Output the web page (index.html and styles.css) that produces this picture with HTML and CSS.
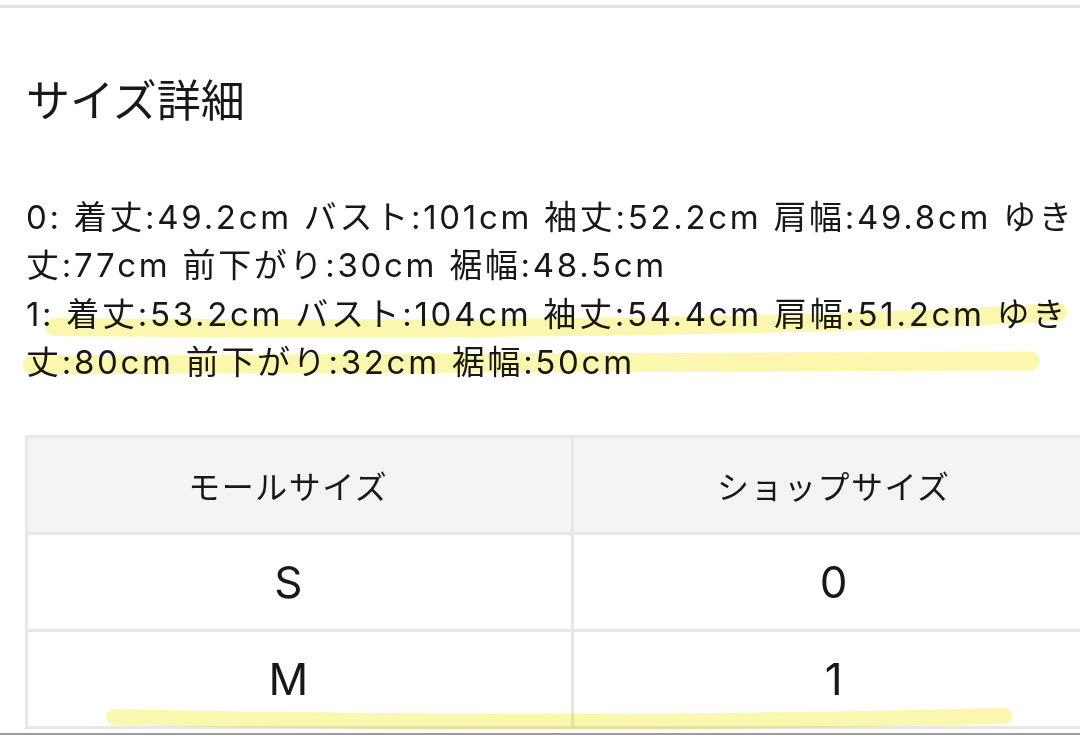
FILE: index.html
```html
<!DOCTYPE html>
<html lang="ja">
<head>
<meta charset="utf-8">
<title>サイズ詳細</title>
<link rel="stylesheet" href="styles.css">
</head>
<body>
<div class="page">
  <div class="rule"></div>
  <section class="detail">
    <h2 class="title">サイズ詳細</h2>
    <p class="spec">0: 着丈:49.2cm バスト:101cm 袖丈:52.2cm 肩幅:49.8cm ゆき丈:77cm 前下がり:30cm 裾幅:48.5cm<br>1: 着丈:53.2cm バスト:104cm 袖丈:54.4cm 肩幅:51.2cm ゆき丈:80cm 前下がり:32cm 裾幅:50cm</p>
    <table class="size-table">
      <thead>
        <tr><th>モールサイズ</th><th>ショップサイズ</th></tr>
      </thead>
      <tbody>
        <tr><td>S</td><td>0</td></tr>
        <tr><td>M</td><td>1</td></tr>
      </tbody>
    </table>
  </section>
  <svg class="marker" width="1080" height="736" viewBox="0 0 1080 736" aria-hidden="true">
    <g fill="none" stroke="#fbf6a4" stroke-linecap="round" opacity="0.88">
      <path d="M54 327 Q 720 333 1058 312" stroke-width="18"/>
      <path d="M32 365 Q 500 363 1030 361" stroke-width="19"/>
      <path d="M114 717 Q 560 727 1004 716" stroke-width="16"/>
    </g>
  </svg>
</div>
</body>
</html>
```
FILE: styles.css
```css
html, body {
  margin: 0;
  padding: 0;
  background: #ffffff;
}

.page {
  position: relative;
  width: 1080px;
  height: 733px;
  overflow: hidden;
  border-bottom: 2px solid #9c9c9c;
  color: #181818;
  font-family: "Inter", "Noto Sans CJK JP", sans-serif;
}

.rule {
  margin-top: 5px;
  height: 3px;
  background: #e2e2e2;
}

.detail {
  padding-left: 26px;
}

.title {
  margin: 65px 0 0 0;
  font-family: "Noto Sans CJK JP", sans-serif;
  font-size: 44px;
  font-weight: 400;
  line-height: 50px;
}

.spec {
  margin: 70px 0 0 0;
  font-size: 33px;
  line-height: 48.3px;
  letter-spacing: 2.7px;
}

.size-table {
  margin: 49px 0 0 -1px;
  width: 1094px;
  table-layout: fixed;
  border-collapse: collapse;
  border: 3px solid #e8e8e8;
}

.size-table th,
.size-table td {
  height: 94px;
  padding: 0 22px 0 0;
  border: 3px solid #e8e8e8;
  text-align: center;
  vertical-align: middle;
}

.size-table th {
  background: #f4f4f4;
  font-family: "Noto Sans CJK JP", sans-serif;
  font-size: 32px;
  font-weight: 400;
  letter-spacing: 1.5px;
}

.size-table td {
  font-size: 44px;
  font-weight: 400;
}

.marker {
  position: absolute;
  left: 0;
  top: 0;
  pointer-events: none;
  mix-blend-mode: multiply;
}
```
